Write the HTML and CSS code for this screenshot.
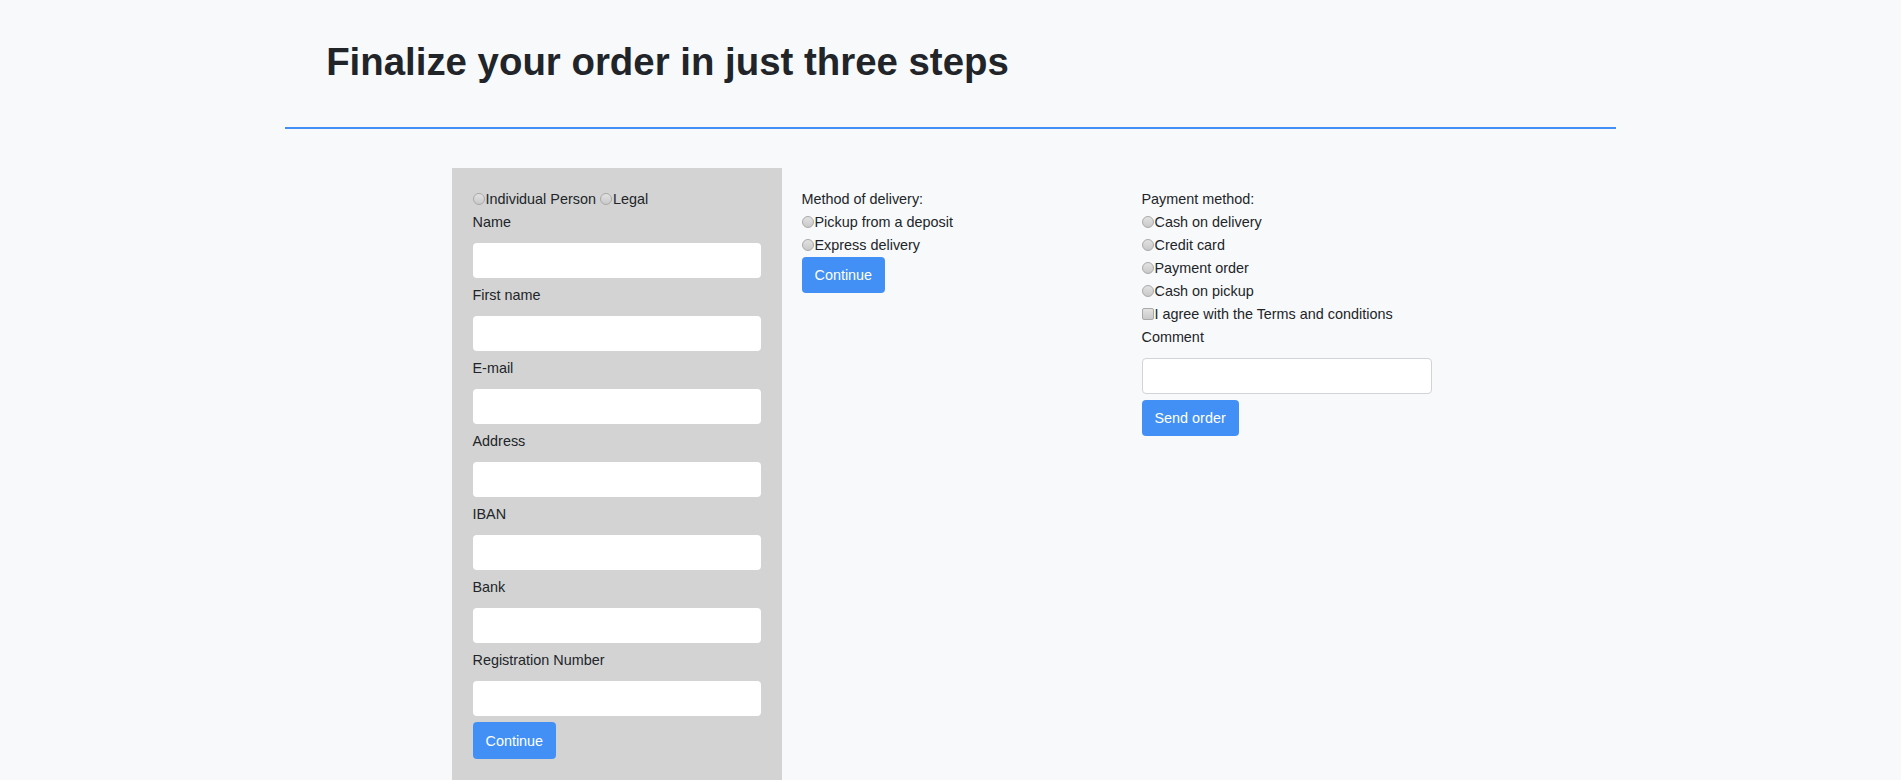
FILE: index.html
```html
<!DOCTYPE html>
<html lang="en">
<head>
<meta charset="utf-8">
<title>Finalize your order</title>
<link rel="stylesheet" href="styles.css">
</head>
<body>
<header class="page-head">
  <h1 class="title">Finalize your order in just three steps</h1>
</header>
<hr class="divider">
<main class="steps">
  <section class="step step-customer">
    <div class="row"><input type="radio" class="radio" name="type"><span>Individual Person</span> <input type="radio" class="radio" name="type"><span>Legal</span></div>
    <label class="label">Name</label>
    <input type="text" class="field">
    <label class="label">First name</label>
    <input type="text" class="field">
    <label class="label">E-mail</label>
    <input type="text" class="field">
    <label class="label">Address</label>
    <input type="text" class="field">
    <label class="label">IBAN</label>
    <input type="text" class="field">
    <label class="label">Bank</label>
    <input type="text" class="field">
    <label class="label">Registration Number</label>
    <input type="text" class="field">
    <button class="btn btn-tall">Continue</button>
  </section>
  <section class="step">
    <div class="row">Method of delivery:</div>
    <div class="row"><input type="radio" class="radio" name="delivery"><span>Pickup from a deposit</span></div>
    <div class="row"><input type="radio" class="radio" name="delivery"><span>Express delivery</span></div>
    <button class="btn">Continue</button>
  </section>
  <section class="step">
    <div class="row">Payment method:</div>
    <div class="row"><input type="radio" class="radio" name="pay"><span>Cash on delivery</span></div>
    <div class="row"><input type="radio" class="radio" name="pay"><span>Credit card</span></div>
    <div class="row"><input type="radio" class="radio" name="pay"><span>Payment order</span></div>
    <div class="row"><input type="radio" class="radio" name="pay"><span>Cash on pickup</span></div>
    <div class="row"><input type="checkbox" class="check"><span>I agree with the Terms and conditions</span></div>
    <label class="label">Comment</label>
    <input type="text" class="field field-bordered">
    <button class="btn">Send order</button>
  </section>
</main>
</body>
</html>
```
FILE: styles.css
```css
html, body {
  margin: 0;
  padding: 0;
}
body {
  background: #f8f9fa;
  color: #212529;
  font-family: "Liberation Sans", Arial, sans-serif;
  font-size: 14.4px;
}
.page-head {
  width: 70%;
  margin: 0 auto;
  padding: 39px 0 0 41px;
  box-sizing: border-box;
}
.title {
  margin: 0;
  font-size: 38.4px;
  line-height: 46px;
  font-weight: bold;
  color: #212529;
}
.divider {
  width: 70%;
  margin: 42px auto 0;
  border: 0;
  border-top: 2px solid #4290f5;
  height: 0;
}
.steps {
  width: 998px;
  margin: 39px auto 0;
  display: grid;
  grid-template-columns: 330px 340px 330px;
  align-items: start;
}
.step {
  padding: 20px 20px 30px 20px;
  display: flex;
  flex-direction: column;
  align-items: flex-start;
}
.step-customer {
  background: #d3d3d3;
  padding: 20px 21px 60px 21px;
  align-items: stretch;
}
.row {
  line-height: 23px;
  height: 23px;
  white-space: nowrap;
}
.label {
  display: block;
  line-height: 23px;
  margin-bottom: 9px;
}
.field {
  display: block;
  width: 100%;
  height: 35px;
  box-sizing: border-box;
  border: 0;
  border-radius: 4px;
  background: #fff;
  margin: 0 0 6px 0;
  font: inherit;
}
.field-bordered {
  width: 290px;
  height: 36px;
  border: 1px solid #ced4da;
}
.radio,
.check {
  -webkit-appearance: none;
  appearance: none;
  width: 12px;
  height: 12px;
  margin: 0 1px 0 0;
  border: 1px solid #a9a9a9;
  background: linear-gradient(#e2e2e2, #c9c9c9);
  box-sizing: border-box;
  vertical-align: -1px;
}
.radio {
  border-radius: 50%;
}
.check {
  border-radius: 2px;
}
.btn {
  align-self: flex-start;
  background: #4290f5;
  color: #fff;
  border: 0;
  border-radius: 4px;
  font-family: inherit;
  font-size: 14.4px;
  height: 36px;
  padding: 0 13px;
  cursor: pointer;
}
.btn-tall {
  height: 37px;
}
```
